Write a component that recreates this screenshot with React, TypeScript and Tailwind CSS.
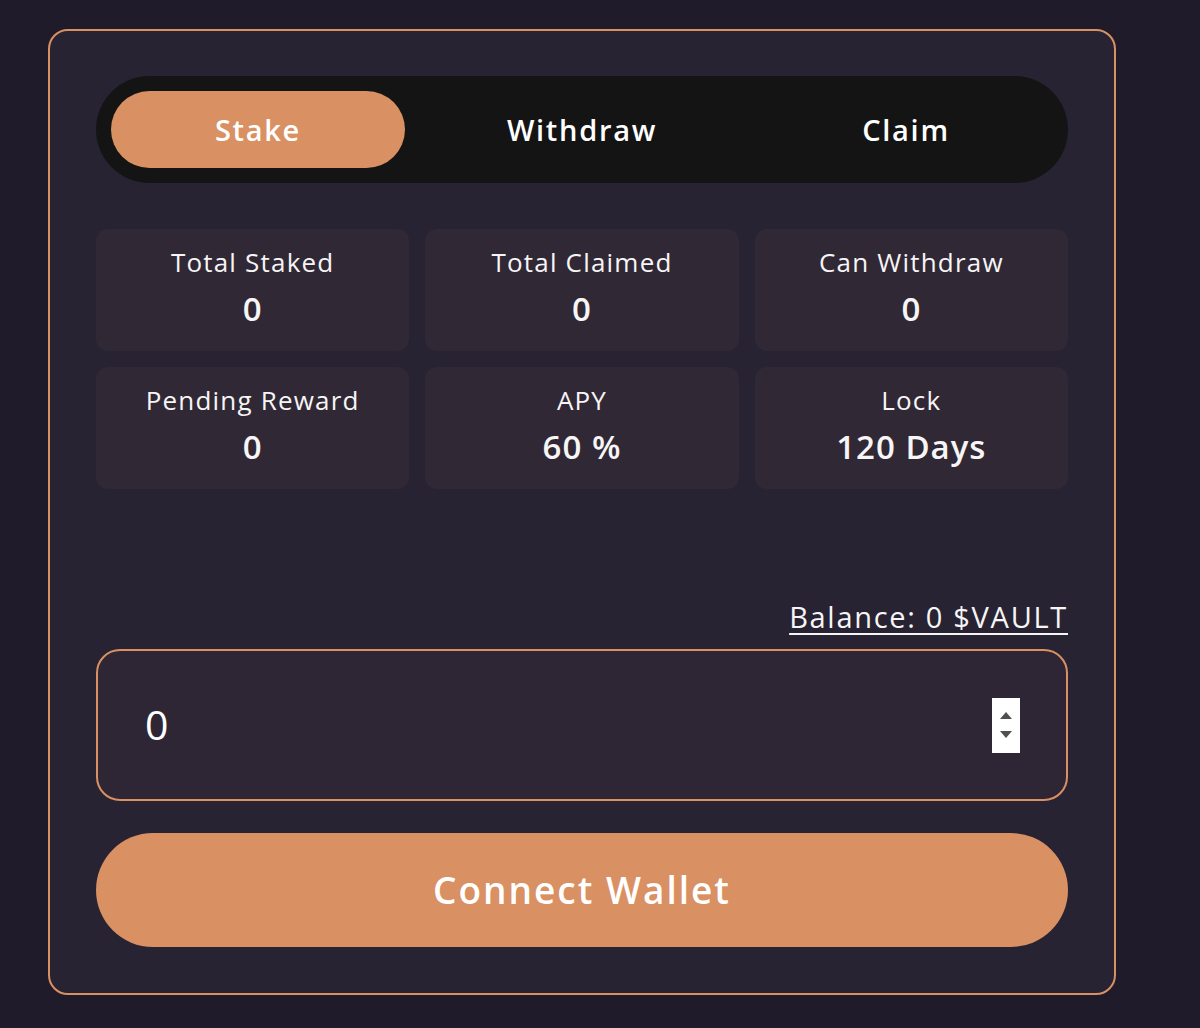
import { useState } from "react";

type Stat = { label: string; value: string };

const stats: Stat[] = [
  { label: "Total Staked", value: "0" },
  { label: "Total Claimed", value: "0" },
  { label: "Can Withdraw", value: "0" },
  { label: "Pending Reward", value: "0" },
  { label: "APY", value: "60 %" },
  { label: "Lock", value: "120 Days" },
];

const tabs = ["Stake", "Withdraw", "Claim"];

export default function App() {
  const [active, setActive] = useState("Stake");
  const [amount, setAmount] = useState("0");

  return (
    <div
      className="min-h-[1028px] w-full bg-[#1f1b2b] pt-[29px] pl-[48px] text-[#f7f5f5]"
      style={{ fontFamily: "'Open Sans', 'Noto Sans', sans-serif" }}
    >
      <div className="w-[1068px] rounded-[20px] border-2 border-[#d99062] bg-[#272333] px-[46px] pt-[45px] pb-[46px]">
        <div className="grid grid-cols-3 gap-[30px] rounded-full bg-[#141414] p-[15px]">
          {tabs.map((tab) => (
            <button
              key={tab}
              type="button"
              onClick={() => setActive(tab)}
              className={
                "h-[77px] rounded-full text-[29px] font-semibold tracking-[1.7px] " +
                (active === tab ? "bg-[#d99062] text-white" : "text-white")
              }
            >
              {tab}
            </button>
          ))}
        </div>

        <div className="mt-[46px] grid grid-cols-3 gap-x-[16px] gap-y-[16px]">
          {stats.map((stat) => (
            <div
              key={stat.label}
              className="flex h-[122px] flex-col items-center justify-center rounded-[12px] bg-[#302835] pb-[7px]"
            >
              <div className="text-[26px] font-medium leading-[32px] tracking-[1.2px]">{stat.label}</div>
              <div className="mt-[13px] text-[33px] font-semibold leading-[36px] tracking-[1px]">{stat.value}</div>
            </div>
          ))}
        </div>

        <div className="mt-[110px] flex justify-end">
          <a className="text-[29px] leading-[36px] tracking-[1.7px] underline underline-offset-[5px] decoration-[2px]">
            Balance: 0 $VAULT
          </a>
        </div>

        <div className="mt-[14px] flex h-[152px] items-center rounded-[24px] border-2 border-[#d99062] bg-[#2e2634] pl-[47px] pr-[46px]">
          <input
            type="text"
            value={amount}
            onChange={(e) => setAmount(e.target.value)}
            className="min-w-0 flex-1 bg-transparent text-[41px] tracking-[2px] text-white outline-none"
          />
          <div className="flex h-[55px] w-[28px] flex-col items-center justify-center gap-[12px] bg-white">
            <svg width="12" height="7" viewBox="0 0 12 7">
              <path d="M6 0 L12 7 L0 7 Z" fill="#505050" />
            </svg>
            <svg width="12" height="7" viewBox="0 0 12 7">
              <path d="M0 0 L12 0 L6 7 Z" fill="#505050" />
            </svg>
          </div>
        </div>

        <button
          type="button"
          className="mt-[32px] h-[114px] w-full rounded-full bg-[#d99062] text-[37px] font-semibold tracking-[2px] text-white"
        >
          Connect Wallet
        </button>
      </div>
    </div>
  );
}
